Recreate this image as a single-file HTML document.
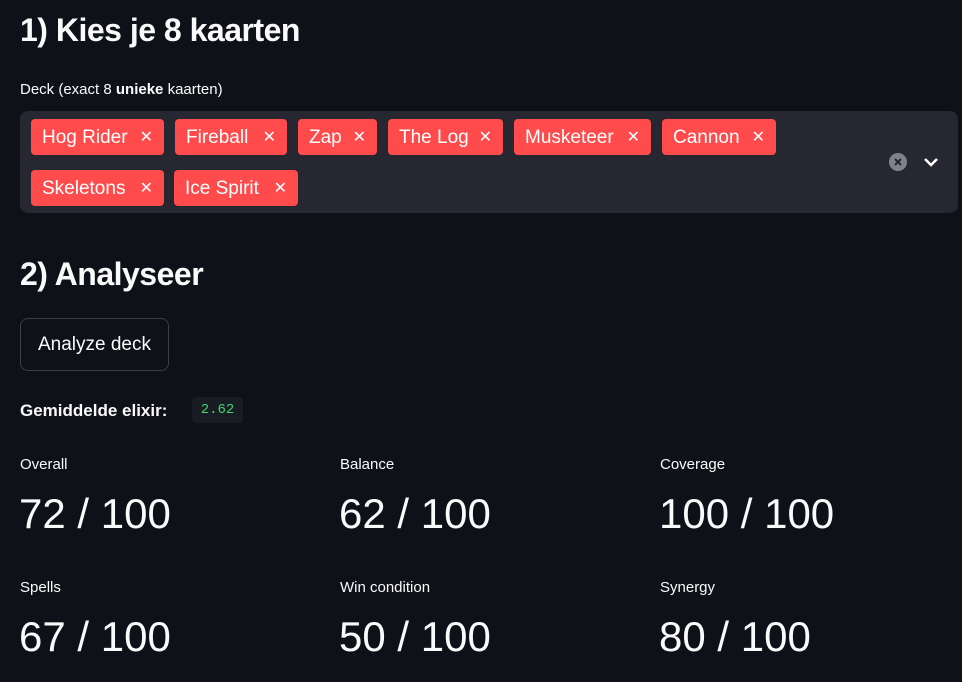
<!DOCTYPE html>
<html><head><meta charset="utf-8"><style>
*{margin:0;padding:0;box-sizing:border-box}
body{width:962px;height:682px;background:#0e1117;color:#fafafa;font-family:"Liberation Sans",sans-serif;position:relative;overflow:hidden}
.a{position:absolute;white-space:nowrap}
h1{position:absolute;font-size:32px;font-weight:bold;left:20px;letter-spacing:-0.5px}
.sel{position:absolute;left:20px;top:111px;width:938px;height:102px;background:#262730;border-radius:8px}
.tag{position:absolute;height:36px;background:#ff4b4b;border-radius:4px;color:#fff;font-size:19px;line-height:37px;padding-left:11px}
.tag span{position:absolute;right:11px;top:0;font-size:16px}
.lbl{font-size:15px;color:#fafafa}
.val{font-size:42px;color:#fafafa}
</style></head><body>
<h1 style="top:12px">1) Kies je 8 kaarten</h1>
<div class="a lbl" style="left:20px;top:81px">Deck (exact 8 <b>unieke</b> kaarten)</div>
<div class="sel">
<div class="tag" style="left:11px;top:8px;width:133px">Hog Rider<span>✕</span></div>
<div class="tag" style="left:155px;top:8px;width:112px">Fireball<span>✕</span></div>
<div class="tag" style="left:278px;top:8px;width:79px">Zap<span>✕</span></div>
<div class="tag" style="left:368px;top:8px;width:115px">The Log<span>✕</span></div>
<div class="tag" style="left:494px;top:8px;width:137px">Musketeer<span>✕</span></div>
<div class="tag" style="left:642px;top:8px;width:114px">Cannon<span>✕</span></div>
<div class="tag" style="left:11px;top:59px;width:133px">Skeletons<span>✕</span></div>
<div class="tag" style="left:154px;top:59px;width:124px">Ice Spirit<span>✕</span></div>
<svg style="position:absolute;left:869px;top:42px" width="18" height="18"><circle cx="9" cy="9" r="9" fill="#7f818c"/><path d="M6 6L12 12M12 6L6 12" stroke="#262730" stroke-width="2"/></svg>
<svg style="position:absolute;left:903px;top:44px" width="16" height="14"><path d="M2 4L8 10L14 4" stroke="#fff" stroke-width="2.5" fill="none"/></svg>
</div>
<h1 style="top:256px">2) Analyseer</h1>
<div class="a" style="left:20px;top:318px;width:149px;height:53px;border:1px solid #3d3f48;border-radius:8px;font-size:19px;line-height:51px;text-align:center">Analyze deck</div>
<div class="a" style="left:20px;top:401px;font-size:17px;font-weight:bold">Gemiddelde elixir:</div>
<div class="a" style="left:192px;top:397px;width:51px;height:26px;background:#1a1c24;border-radius:4px;color:#3dd56d;font-family:'Liberation Mono',monospace;font-size:14px;line-height:26px;text-align:center">2.62</div>
<div class="a lbl" style="left:20px;top:456px">Overall</div>
<div class="a lbl" style="left:340px;top:456px">Balance</div>
<div class="a lbl" style="left:660px;top:456px">Coverage</div>
<div class="a val" style="left:19px;top:490px">72 / 100</div>
<div class="a val" style="left:339px;top:490px">62 / 100</div>
<div class="a val" style="left:659px;top:490px">100 / 100</div>
<div class="a lbl" style="left:20px;top:579px">Spells</div>
<div class="a lbl" style="left:340px;top:579px">Win condition</div>
<div class="a lbl" style="left:660px;top:579px">Synergy</div>
<div class="a val" style="left:19px;top:613px">67 / 100</div>
<div class="a val" style="left:339px;top:613px">50 / 100</div>
<div class="a val" style="left:659px;top:613px">80 / 100</div>
</body></html>
